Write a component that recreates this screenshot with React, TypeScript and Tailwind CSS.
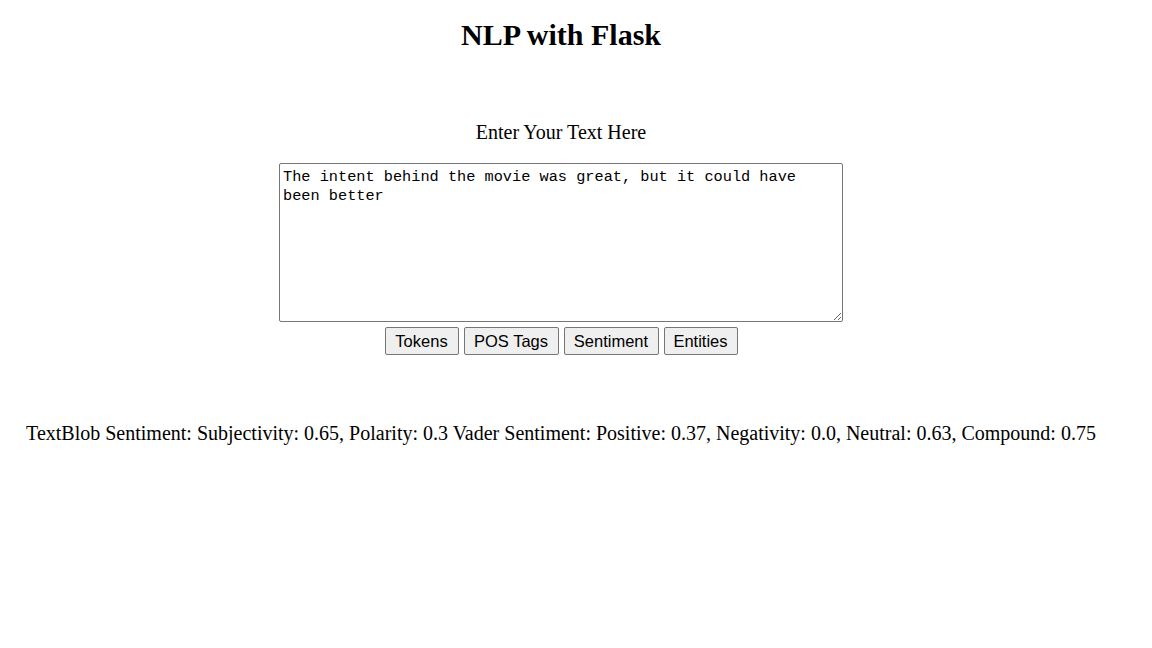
import React from "react";

export default function App() {
  return (
    <div className="w-[1122px] min-h-[648px] bg-white text-black text-center">
      <h1 className="font-['Liberation_Serif',serif] font-bold text-[30px] leading-[36px] pt-[17px]">
        NLP with Flask
      </h1>
      <div className="mt-[67px] font-['Liberation_Serif',serif] text-[20px] leading-[24px]">
        Enter Your Text Here
      </div>
      <form className="mt-[19px] flex flex-col items-center">
        <textarea
          className="w-[564px] h-[159px] border border-[#767676] rounded-[2px] px-[3px] pt-[4px] pb-[2px] font-['Liberation_Mono',monospace] text-[15.27px] leading-[19px] text-black resize-y"
          defaultValue="The intent behind the movie was great, but it could have been better"
        />
        <div className="mt-[5px] flex gap-[5px] font-['Liberation_Sans',sans-serif] text-[16.5px]">
          <button type="button" className="w-[74px] h-[28px] bg-[#efefef] border border-[#767676] rounded-[2px]">Tokens</button>
          <button type="button" className="w-[95px] h-[28px] bg-[#efefef] border border-[#767676] rounded-[2px]">POS Tags</button>
          <button type="button" className="w-[95px] h-[28px] bg-[#efefef] border border-[#767676] rounded-[2px]">Sentiment</button>
          <button type="button" className="w-[74px] h-[28px] bg-[#efefef] border border-[#767676] rounded-[2px]">Entities</button>
        </div>
      </form>
      <p className="mt-[66px] font-['Liberation_Serif',serif] text-[20px] leading-[24px]">
        TextBlob Sentiment: Subjectivity: 0.65, Polarity: 0.3 Vader Sentiment: Positive: 0.37, Negativity: 0.0, Neutral: 0.63, Compound: 0.75
      </p>
    </div>
  );
}
